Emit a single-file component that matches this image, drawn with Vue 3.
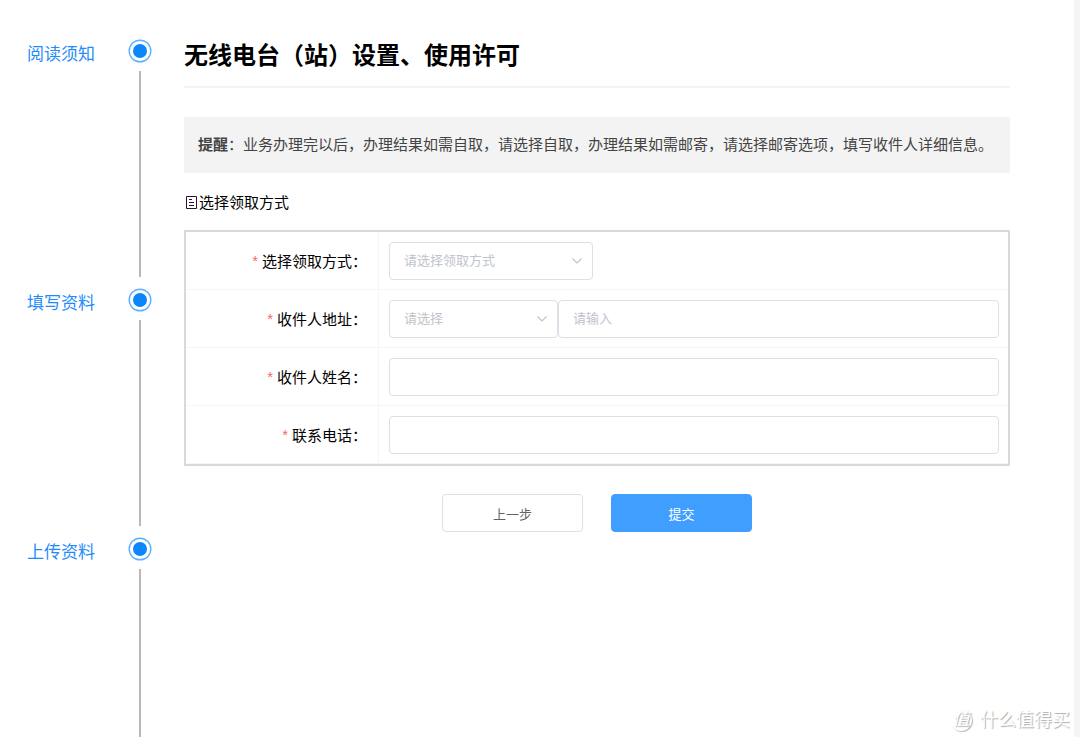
<script setup>
import { ref } from 'vue'

const steps = ['阅读须知', '填写资料', '上传资料']
const method = ref('')
const region = ref('')
const address = ref('')
const name = ref('')
const phone = ref('')
</script>

<template>
  <div class="page">
    <ol class="steps">
      <li v-for="step in steps" :key="step" class="step">
        <a href="#" class="step-title">{{ step }}</a>
        <div class="track">
          <svg class="dot" viewBox="0 0 24 24" aria-hidden="true">
            <circle cx="12" cy="12" r="10.8" fill="#fff" stroke="#5db1ff" stroke-width="1.4" />
            <circle cx="12" cy="12" r="7" fill="#0b87fb" />
          </svg>
          <span class="line"></span>
        </div>
      </li>
    </ol>

    <main class="content">
      <h1 class="title">无线电台（站）设置、使用许可</h1>
      <p class="notice"><strong>提醒</strong>：业务办理完以后，办理结果如需自取，请选择自取，办理结果如需邮寄，请选择邮寄选项，填写收件人详细信息。</p>

      <form @submit.prevent>
        <h2 class="section">
          <svg class="doc" viewBox="0 0 15 16" aria-hidden="true">
            <path d="M2.5 1.5h10v12h-10zM5 4.5h3M5 7.5h5M5 10.5h5" fill="none" stroke="#2b1238" />
          </svg>
          <span>选择领取方式</span>
        </h2>

        <div class="fields">
          <div class="row">
            <div class="label"><span class="star">*</span><label for="method">选择领取方式：</label></div>
            <div class="control">
              <div class="select-box method">
                <select id="method" v-model="method">
                  <option value="" disabled>请选择领取方式</option>
                  <option value="self">自取</option>
                  <option value="mail">邮寄</option>
                </select>
                <svg class="arrow" viewBox="0 0 12 8" aria-hidden="true"><path d="M1.5 1.5l4.5 4.5 4.5-4.5" fill="none" stroke="#c0c4cc" stroke-width="1.2" /></svg>
              </div>
            </div>
          </div>
          <div class="row">
            <div class="label"><span class="star">*</span><label for="region">收件人地址：</label></div>
            <div class="control">
              <div class="select-box region">
                <select id="region" v-model="region">
                  <option value="" disabled>请选择</option>
                </select>
                <svg class="arrow" viewBox="0 0 12 8" aria-hidden="true"><path d="M1.5 1.5l4.5 4.5 4.5-4.5" fill="none" stroke="#c0c4cc" stroke-width="1.2" /></svg>
              </div>
              <input v-model="address" class="text" type="text" placeholder="请输入" aria-label="收件人地址" />
            </div>
          </div>
          <div class="row">
            <div class="label"><span class="star">*</span><label for="name">收件人姓名：</label></div>
            <div class="control"><input id="name" v-model="name" class="text" type="text" /></div>
          </div>
          <div class="row">
            <div class="label"><span class="star">*</span><label for="phone">联系电话：</label></div>
            <div class="control"><input id="phone" v-model="phone" class="text" type="tel" /></div>
          </div>
        </div>

        <div class="actions">
          <button type="button" class="btn">上一步</button>
          <button type="submit" class="btn primary">提交</button>
        </div>
      </form>
    </main>

    <div class="watermark">
      <span class="badge">值</span>
      <span>什么值得买</span>
    </div>
  </div>
</template>

<style>
body {
  margin: 0;
  background: #fff;
}
</style>

<style scoped>
.page {
  box-sizing: border-box;
  display: flex;
  position: relative;
  height: calc(100vh - 5px);
  min-height: 640px;
  padding: 38px 64px 0 27px;
  border-right: 6px solid #f5f5f5;
  font-family: "Liberation Sans", "Noto Sans CJK SC", sans-serif;
  color: #000;
}
.steps {
  display: flex;
  flex-direction: column;
  flex: none;
  width: 125px;
  margin: 0;
  padding: 1px 0 0;
  list-style: none;
}
.step {
  display: flex;
  justify-content: space-between;
  height: 249px;
}
.step:last-child {
  flex: 1;
  height: auto;
}
.step-title {
  margin-top: 4px;
  font-size: 17px;
  line-height: 24px;
  color: #1f8cfa;
  text-decoration: none;
}
.track {
  display: flex;
  flex-direction: column;
  align-items: center;
  width: 24px;
}
.dot {
  flex: none;
  width: 24px;
  height: 24px;
}
.line {
  flex: 1;
  width: 2px;
  margin: 8px 0 11px;
  background: #b9b9b9;
}
.step:last-child .line {
  margin-bottom: 0;
}
.content {
  flex: 1;
  min-width: 0;
  margin-left: 32px;
}
.title {
  margin: 0;
  padding-bottom: 13px;
  border-bottom: 2px solid #f3f3f3;
  font-size: 24px;
  line-height: 35px;
}
.notice {
  margin: 29px 0 0;
  padding: 16px 14px;
  background: #f3f3f3;
  font-size: 15px;
  line-height: 24px;
  color: #444;
}
.section {
  display: flex;
  align-items: center;
  margin: 18px 0 15px;
  font-size: 15px;
  font-weight: 400;
  line-height: 24px;
}
.doc {
  width: 15px;
  height: 16px;
}
.fields {
  border: 2px solid #d9d9d9;
}
.row {
  box-sizing: border-box;
  display: flex;
  height: 58px;
  border-bottom: 1px solid #f5f5f5;
}
.label {
  box-sizing: border-box;
  display: flex;
  align-items: center;
  justify-content: flex-end;
  gap: 4px;
  flex: none;
  width: 193px;
  padding-right: 11px;
  border-right: 1px solid #f5f5f5;
  font-size: 15px;
}
.star {
  color: #f56c6c;
}
.control {
  display: flex;
  align-items: center;
  flex: 1;
  min-width: 0;
  padding: 0 9px 0 10px;
}
.select-box {
  position: relative;
  flex: none;
}
.method {
  width: 204px;
}
.region {
  width: 169px;
}
select,
.text {
  box-sizing: border-box;
  width: 100%;
  height: 38px;
  margin: 0;
  padding: 0 14px;
  border: 1px solid #dcdfe6;
  border-radius: 4px;
  background: #fff;
  font-family: inherit;
  font-size: 13px;
  color: #606266;
}
select {
  display: block;
  appearance: none;
  color: #c0c4cc;
}
.text {
  flex: 1;
  min-width: 0;
}
.text::placeholder {
  color: #c0c4cc;
}
.arrow {
  position: absolute;
  top: 15px;
  right: 10px;
  width: 12px;
  height: 8px;
  pointer-events: none;
}
.actions {
  display: flex;
  justify-content: center;
  gap: 28px;
  margin-top: 28px;
}
.btn {
  width: 141px;
  height: 38px;
  padding: 0;
  border: 1px solid #dcdfe6;
  border-radius: 4px;
  background: #fff;
  font-family: inherit;
  font-size: 13px;
  color: #606266;
}
.primary {
  border-color: #409eff;
  background: #409eff;
  color: #fff;
}
.watermark {
  position: absolute;
  right: 4px;
  bottom: 4px;
  display: flex;
  align-items: center;
  gap: 8px;
  font-size: 18px;
  line-height: 26px;
  color: #fff;
  text-shadow: 1px 1px 1px #aaa;
}
.badge {
  width: 22px;
  height: 22px;
  border-radius: 50%;
  box-shadow: 1px 1px 1px #bbb;
  font-size: 17px;
  font-style: italic;
  line-height: 22px;
  text-align: center;
}
</style>
